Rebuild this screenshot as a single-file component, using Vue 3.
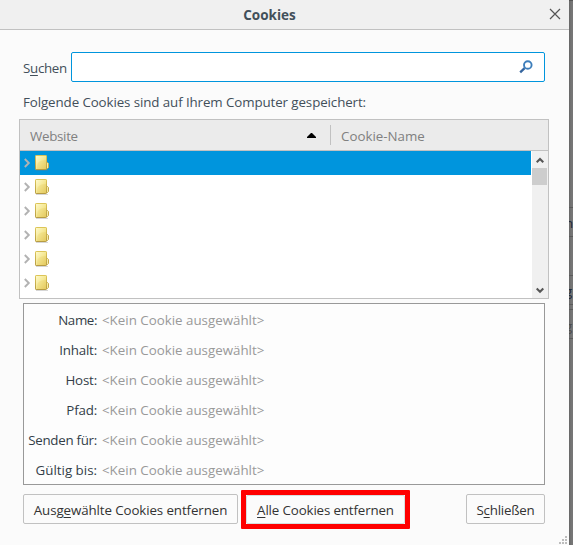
<script setup>
const rows = [0, 1, 2, 3, 4, 5]
const fields = [
  { label: 'Name:', cls: 'l-name' },
  { label: 'Inhalt:', cls: 'l-inhalt' },
  { label: 'Host:', cls: 'l-host' },
  { label: 'Pfad:', cls: 'l-pfad' },
  { label: 'Senden für:', cls: 'l-senden' },
  { label: 'Gültig bis:', cls: 'l-gueltig' },
]
</script>

<template>
  <div class="screen">
    <main class="dialog">
      <header class="titlebar">
        <h1>Cookies</h1>
        <svg class="close" width="12" height="12" viewBox="0 0 12 12"><path d="M1 1L11 11M11 1L1 11" fill="none" stroke="#555" stroke-width="1.2" /></svg>
      </header>

      <div class="search">
        <label>S<u>u</u>chen</label>
        <div class="input">
          <svg width="14" height="14" viewBox="0 0 14 14">
            <path d="M5.6 8.2L1.2 12.4" fill="none" stroke="#35659f" stroke-width="2.3" />
            <circle cx="8.8" cy="5" r="3.8" fill="none" stroke="#3d7ebb" stroke-width="1.9" />
          </svg>
        </div>
      </div>

      <p class="intro">Folgende Cookies sind auf Ihrem Computer gespeichert:</p>

      <section class="tree">
        <div class="head">
          <div class="col site"><span>Website</span>
            <svg width="9" height="5" viewBox="0 0 9 5"><path d="M0 5V4L4 0H5L9 4V5Z" fill="#000" /></svg>
          </div>
          <div class="col name"><span>Cookie-Name</span></div>
        </div>
        <div class="body">
          <div class="rows">
            <div v-for="r in rows" :key="r" class="row" :class="{ selected: r === 0 }">
              <svg class="twisty" width="7" height="10" viewBox="0 0 7 10"><path d="M.8 1L4.8 5L.8 9" fill="none" stroke="#b2b2b2" stroke-width="1.9" /></svg>
              <svg class="folder" width="15" height="17" viewBox="0 0 15 17">
                <defs>
                  <linearGradient id="paper" x1="0" y1="0" x2="1" y2="1">
                    <stop offset="0" stop-color="#fffbd0" /><stop offset=".5" stop-color="#f5e894" /><stop offset="1" stop-color="#e3c85c" />
                  </linearGradient>
                  <linearGradient id="edge" x1="0" y1="0" x2="0" y2="1">
                    <stop offset="0" stop-color="#dcc558" /><stop offset="1" stop-color="#b79c43" />
                  </linearGradient>
                </defs>
                <path d="M1 15.5H13" stroke="#777" stroke-opacity=".3" />
                <path d="M11.5 7.5H12.5L13.5 8.5V12.5L12.5 13.5H11.5Z" fill="#f8edaa" stroke="#c4a94c" />
                <rect x=".5" y=".5" width="11" height="14" rx=".6" fill="url(#paper)" stroke="url(#edge)" />
                <path d="M2 13C2 7 4 5.5 11 5V14H2Z" fill="#e5c85a" fill-opacity=".25" />
              </svg>
            </div>
          </div>
          <div class="scrollbar">
            <svg width="8" height="7" viewBox="0 0 8 7"><path d="M.7 5.2L4 1.9L7.3 5.2" fill="none" stroke="#555" stroke-width="2.1" /></svg>
            <div class="thumb"></div>
            <svg class="down" width="8" height="7" viewBox="0 0 8 7"><path d="M.7 1.5L4 4.8L7.3 1.5" fill="none" stroke="#555" stroke-width="2.1" /></svg>
          </div>
        </div>
      </section>

      <section class="details">
        <div v-for="f in fields" :key="f.label" class="field">
          <span class="label"><span :class="f.cls">{{ f.label }}</span></span>
          <span class="value">&lt;Kein Cookie ausgewählt&gt;</span>
        </div>
      </section>

      <footer>
        <button class="b1"><span>Ausg<u>e</u>wählte Cookies entfernen</span></button>
        <div class="marked"><button class="b2"><span><u>A</u>lle Cookies entfernen</span></button></div>
        <button class="b3"><span>S<u>c</u>hließen</span></button>
      </footer>
      <svg class="grip" width="8" height="8" viewBox="0 0 8 8" fill="#bdbdbd">
        <path d="M6 0h2v2h-2zM3 3h2v2h-2zM6 3h2v2h-2zM0 6h2v2h-2zM3 6h2v2h-2zM6 6h2v2h-2z" />
      </svg>
    </main>
    <aside class="backdrop">
      <div class="cell c1"></div>
      <div class="cell c2"><span>n</span></div>
      <div class="cell c3"></div>
      <div class="cell c4"><span>g</span></div>
      <div class="cell c5"></div>
      <div class="cell c6"><span>g</span></div>
    </aside>
  </div>
</template>

<style>
body { overflow: hidden; }
</style>

<style scoped>
* { box-sizing: border-box; }
.screen {
  display: flex; width: 573px; height: 545px; overflow: hidden;
  font: 13.33px/20px "Open Sans", "Noto Sans", sans-serif; color: #424f5a; white-space: nowrap;
}
svg { display: block; flex: none; }
u { text-decoration: underline; text-underline-offset: 2px; text-decoration-thickness: 1px; text-decoration-skip-ink: none; }
.dialog { position: relative; width: 569px; height: 545px; background: #fbfbfb; flex: none; }
.titlebar { display: flex; height: 30px; background: #f0f0f0; border-bottom: 1px solid #c1c1c1; justify-content: flex-end; padding: 8px 8px 0 0; }
h1 { margin: -3px 9px 0 0; font-size: 13.5px; line-height: 20px; font-weight: 700; width: 540px; text-align: center; padding-right: 1px; color: #424f5a; flex: none; }
.search { display: flex; margin-top: 22px; padding-left: 23px; height: 30px; }
label { width: 48px; line-height: 33px; letter-spacing: -.3px; }
.input { width: 474px; height: 30px; border: 1px solid #0095dd; border-radius: 2px; background: #fff; display: flex; justify-content: flex-end; padding: 7px 11px 0 0; }
.intro { margin: 10px 0 0 23px; height: 20px; letter-spacing: -.095px; }
.tree { width: 530px; height: 180px; margin: 7px 0 0 19px; border: 1px solid #c1c1c1; background: #fff; }
.head { display: flex; align-items: center; height: 31px; background: #ebebeb; border-bottom: 1px solid #c1c1c1; color: #808080; }
.col { display: flex; align-items: center; height: 20px; }
.site { width: 311px; padding: 2px 14px 0 10px; justify-content: space-between; border-right: 1px solid #c1c1c1; letter-spacing: -.3px; }
.site svg { margin-top: -2px; }
.name { padding: 2px 0 0 10px; }
.body { display: flex; height: 147px; }
.rows { width: 511px; }
.row { display: flex; height: 24px; padding: 4px 0 0 4px; gap: 4px; }
.twisty { margin-top: 3px; }
.selected { background: #0095dd; }
.scrollbar { width: 16px; height: 147px; margin-left: 1px; background: #f0f0f0; display: flex; flex-direction: column; padding-top: 6px; }
.scrollbar svg { margin-left: 4px; }
.thumb { width: 15px; height: 17px; margin-top: 4px; background: #cdcdcd; flex: none; }
.scrollbar .down { margin-top: 102px; }
.details { width: 522px; height: 182px; margin: 4px 0 0 23px; border: 1px solid #999; background: #fdfdfd; padding-top: 1px; }
.field { display: flex; height: 30px; line-height: 30px; gap: 5px; }
.label { width: 73px; text-align: right; color: #333e48; }
.l-name { letter-spacing: -.4px; }
.l-inhalt, .l-host, .l-pfad { letter-spacing: -.18px; }
.l-senden { letter-spacing: -.28px; }
.value { color: #999; }
footer { display: flex; padding: 9px 0 0 23px; height: 60px; align-items: flex-start; }
button { display: block; height: 30px; padding: 0; border: 1px solid #c1c1c1; border-radius: 2px; background: #fbfbfb; font: inherit; line-height: 30px; color: #333; text-align: center; flex: none; }
.b1 { width: 215px; letter-spacing: -.1px; }
.marked { width: 169px; height: 39px; margin: -4px 56px 0 3px; border: 5px solid #f00; border-radius: 1px; flex: none; }
.b2 { width: 159px; height: 29px; line-height: 28px; border-color: #d6dede; letter-spacing: -.14px; }
.b3 { width: 79px; letter-spacing: -.22px; }
.grip { position: absolute; right: 2px; bottom: 1px; }
.backdrop { width: 4px; background: linear-gradient(90deg, #666, #747474 50%, #777); border-top: 1px solid #555; overflow: hidden; height: 545px; }
.cell { border-bottom: 1px solid #5b5b5b; overflow: hidden; }
.cell span { display: block; margin-left: -4px; color: #202938; }
.c1 { height: 207px; }
.c2 { height: 29px; line-height: 30px; }
.c3 { height: 39px; }
.c4 { height: 29px; line-height: 30px; }
.c5 { height: 5px; }
.c6 { height: 29px; line-height: 32px; }
.c6 span { color: #4c4c4c; }
</style>
